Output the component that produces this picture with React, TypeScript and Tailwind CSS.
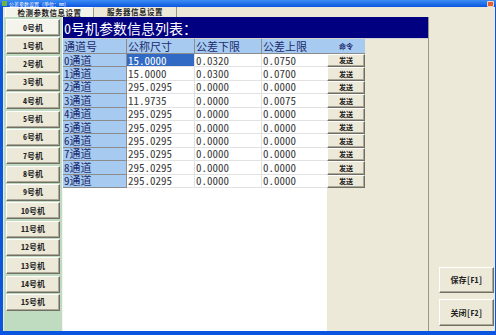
import React from "react";

const rows = [
  ["0通道", "15.0000", "0.0320", "0.0750"],
  ["1通道", "15.0000", "0.0300", "0.0700"],
  ["2通道", "295.0295", "0.0000", "0.0000"],
  ["3通道", "11.9735", "0.0000", "0.0075"],
  ["4通道", "295.0295", "0.0000", "0.0000"],
  ["5通道", "295.0295", "0.0000", "0.0000"],
  ["6通道", "295.0295", "0.0000", "0.0000"],
  ["7通道", "295.0295", "0.0000", "0.0000"],
  ["8通道", "295.0295", "0.0000", "0.0000"],
  ["9通道", "295.0295", "0.0000", "0.0000"],
];

const machines = Array.from({ length: 16 }, (_, i) => `${i}号机`);

const btn =
  "flex items-center justify-center bg-[#ece9d8] border-t border-l border-white border-b border-r border-b-[#716f64] border-r-[#716f64] shadow-[inset_-1px_-1px_0_#aca899] text-[#222] font-bold";

export default function App() {
  return (
    <div className="w-[496px] h-[335px] bg-[#0a56e0] flex flex-col font-[family-name:'Noto_Sans_Mono_CJK_SC','Noto_Sans_CJK_SC',sans-serif] overflow-hidden">
      {/* title bar */}
      <div className="h-[7px] flex items-center bg-gradient-to-b from-[#3b8cf5] to-[#0a56e0] px-[2px]">
        <div className="w-[5px] h-[5px] bg-[#6cb04a] mr-[2px]" />
        <span className="text-[5px] leading-none text-white">公差参数设置（单位：mm）</span>
        <div className="ml-auto w-[7px] h-[6px] bg-[#e0602f] rounded-[1px] border border-white/70" />
      </div>

      <div className="flex-1 flex flex-col bg-[#ece9d8] ml-[3px] mr-[1px] mb-[4px]">
        {/* tabs */}
        <div className="h-[10px] flex pl-[2px] text-[7.5px] leading-none font-bold text-[#222]">
          <div className="w-[89px] flex items-center justify-center tracking-[0.5px] bg-[#f4f3ea] border-t border-l border-white border-r border-r-[#9a9888]">
            检测参数信息设置
          </div>
          <div className="w-[83px] flex items-center justify-center tracking-[0.5px] border-r border-[#9a9888]">
            服务器信息设置
          </div>
        </div>

        <div className="flex-1 flex">
          {/* machine list */}
          <div className="ml-[1px] w-[59px] bg-[#c0dcc0] pt-[2px] pl-[2px] flex flex-col gap-[1.33px] border-r border-[#f4f4f4]">
            {machines.map((m, i) => (
              <div
                key={m}
                className={`${btn} w-[54px] h-[17px] text-[8px] ${i === 0 ? "bg-[#f4f3ec]" : ""}`}
              >
                {m}
              </div>
            ))}
          </div>

          {/* main grid */}
          <div className="w-[365px] flex flex-col">
            <div className="h-[21px] bg-[#000080] text-white text-[14px] leading-none flex items-center pl-[1px]">
              0号机参数信息列表：
            </div>
            <div className="flex-1 flex border-t border-[#d0d0d0]">
              <div className="w-[264px] bg-white text-[11px] leading-none">
                <div className="h-[15px] flex bg-[#a6caf0] text-[#1c2a6e] border-b border-[#8c8c8c]">
                  <div className="w-[64px] pl-[1px] flex items-center border-r border-[#8c8c8c]">通道号</div>
                  <div className="w-[68px] pl-[1px] flex items-center border-r border-[#8c8c8c]">公称尺寸</div>
                  <div className="w-[67px] pl-[1px] flex items-center border-r border-[#8c8c8c]">公差下限</div>
                  <div className="w-[65px] pl-[1px] flex items-center">公差上限</div>
                </div>
                {rows.map((r, i) => (
                  <div key={i} className="h-[13.4px] flex text-[#3a3a3a]">
                    <div className="w-[64px] pl-[1px] flex items-center bg-[#a6caf0] text-[#1c2a6e] border-b border-r border-[#8c8c8c]">
                      {r[0]}
                    </div>
                    <div
                      className={`w-[68px] pl-[1px] flex items-center border-b border-r border-[#e2e2e2] ${
                        i === 0 ? "bg-[#316ac5] text-white" : ""
                      }`}
                    >
                      {r[1]}
                    </div>
                    <div className="w-[67px] pl-[1px] flex items-center border-b border-r border-[#e2e2e2]">{r[2]}</div>
                    <div className="w-[65px] pl-[1px] flex items-center border-b border-[#e2e2e2]">{r[3]}</div>
                  </div>
                ))}
              </div>
              <div className="flex-1 flex flex-col">
                <div className="w-[38px] h-[15px] bg-[#a6caf0] flex items-center justify-center text-[7px] font-bold text-[#1c2a6e] border-b border-[#8c8c8c]">
                  命令
                </div>
                {rows.map((_, i) => (
                  <div key={i} className={`${btn} w-[38px] h-[13.4px] text-[7px]`}>
                    发送
                  </div>
                ))}
              </div>
            </div>
          </div>

          {/* right panel */}
          <div className="flex-1 border-l border-[#9a9888] flex flex-col justify-end items-end pr-[1px] pb-[5px] gap-[6px]">
            <div className={`${btn} w-[55px] h-[26px] text-[8px]`}>保存[F1]</div>
            <div className={`${btn} w-[55px] h-[27px] text-[8px]`}>关闭[F2]</div>
          </div>
        </div>
      </div>
    </div>
  );
}
